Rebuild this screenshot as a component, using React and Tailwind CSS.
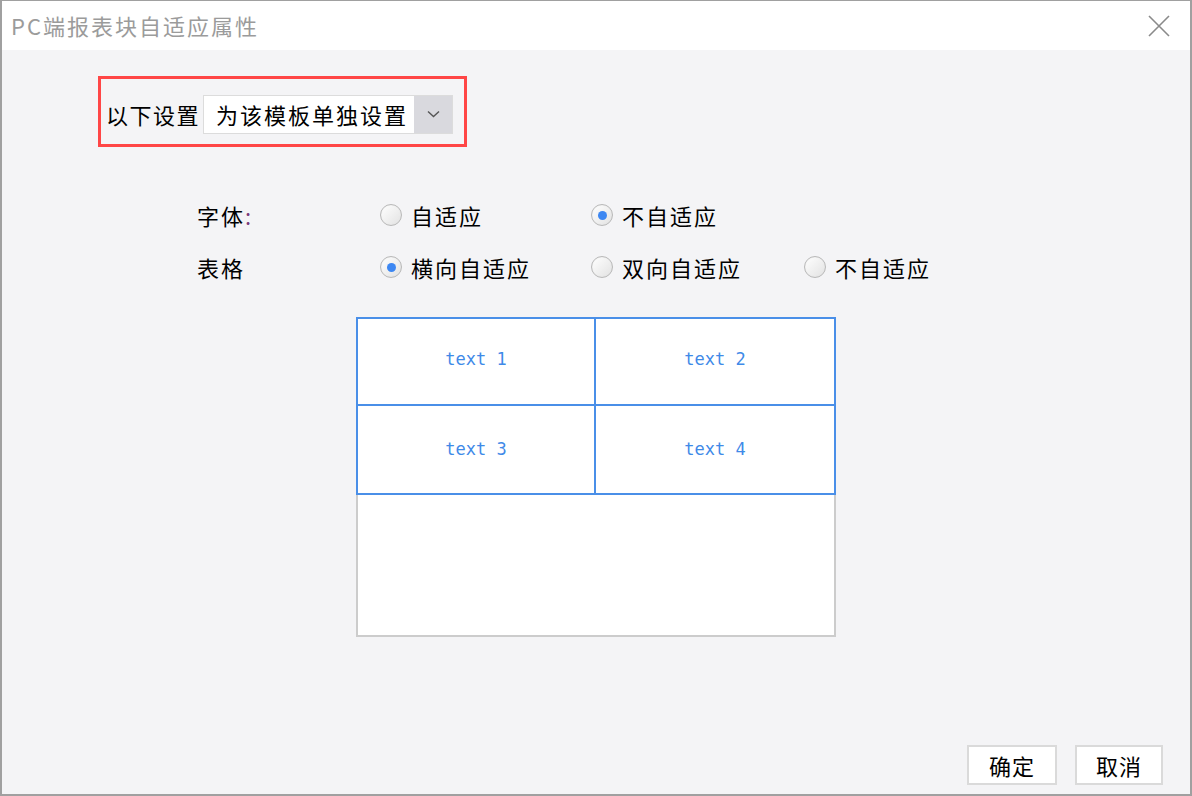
import React, { useState } from "react";

const cjk = { fontFamily: '"Noto Sans CJK SC", "Noto Sans", sans-serif' };

function Radio({ checked, label, onClick }) {
  return (
    <button type="button" onClick={onClick} className="flex items-center gap-[9px] h-[30px]">
      <span className="w-[22px] h-[22px] rounded-full border border-[#b9b9b9] bg-gradient-to-br from-white to-[#e2e2e2] flex items-center justify-center shadow-[inset_0_0_1px_#ddd]">
        {checked && <span className="w-[9px] h-[9px] rounded-full bg-[#3d87f2]" />}
      </span>
      <span className="text-[22px] leading-none text-black tracking-[2px]">{label}</span>
    </button>
  );
}

export default function App() {
  const [font, setFont] = useState("none");
  const [table, setTable] = useState("h");

  return (
    <div className="w-[1192px] h-[796px] flex flex-col bg-[#f4f4f6] border-t border-x-2 border-b-2 border-[#a0a0a0]" style={cjk}>
      {/* title bar */}
      <div className="h-[49px] bg-white flex items-center justify-between pl-[9px] pr-[20px]">
        <span className="text-[22px] text-[#9b9b9b] tracking-[2px]">PC端报表块自适应属性</span>
        <svg width="22" height="22" viewBox="0 0 22 22">
          <path d="M1 1L21 21M21 1L1 21" stroke="#8a8a8a" strokeWidth="1.6" />
        </svg>
      </div>

      <div className="flex-1 flex flex-col">
        {/* template setting */}
        <div className="mt-[26px] ml-[96px] w-[369px] h-[71px] border-[3px] border-[#ff4646] flex items-center pl-[5px] pt-[5px]">
          <span className="text-[22px] leading-none tracking-[1.5px] text-black">以下设置</span>
          <div className="ml-[3px] w-[250px] h-[39px] flex border border-[#dcdcdc] bg-white">
            <span className="flex-1 flex items-center pl-[12px] text-[22px] leading-none tracking-[2px] text-black">为该模板单独设置</span>
            <span className="w-[38px] bg-[#d9d9de] flex items-center justify-center">
              <svg width="13" height="8" viewBox="0 0 13 8">
                <path d="M1 1.5L6.5 6.5L12 1.5" fill="none" stroke="#555" strokeWidth="1.4" />
              </svg>
            </span>
          </div>
        </div>

        {/* options */}
        <div className="mt-[53px] ml-[195px] grid grid-cols-[183px_211px_213px_auto] gap-y-[22px] items-center">
          <span className="text-[22px] leading-none tracking-[2px] text-black">
            字体<span className="text-[#7a3b7a]">:</span>
          </span>
          <Radio label="自适应" checked={font === "auto"} onClick={() => setFont("auto")} />
          <Radio label="不自适应" checked={font === "none"} onClick={() => setFont("none")} />
          <span />

          <span className="text-[22px] leading-none tracking-[2px] text-black">表格</span>
          <Radio label="横向自适应" checked={table === "h"} onClick={() => setTable("h")} />
          <Radio label="双向自适应" checked={table === "both"} onClick={() => setTable("both")} />
          <Radio label="不自适应" checked={table === "none"} onClick={() => setTable("none")} />
        </div>

        {/* preview */}
        <div className="mt-[35px] ml-[354px] w-[480px] h-[320px] bg-white flex flex-col">
          <div className="h-[178px] grid grid-cols-2 grid-rows-2 border-2 border-[#4a8fe8] text-[17px] text-[#3f8ae8]" style={{ fontFamily: '"DejaVu Sans Mono", monospace' }}>
            <div className="flex items-center justify-center border-r-2 border-b-2 border-[#4a8fe8] pb-[4px]">text 1</div>
            <div className="flex items-center justify-center border-b-2 border-[#4a8fe8] pb-[4px]">text 2</div>
            <div className="flex items-center justify-center border-r-2 border-[#4a8fe8]">text 3</div>
            <div className="flex items-center justify-center">text 4</div>
          </div>
          <div className="flex-1 border-2 border-t-0 border-[#cccccc]" />
        </div>

        {/* actions */}
        <div className="mt-auto mb-[9px] mr-[27px] flex justify-end gap-[18px]">
          <button className="w-[90px] h-[40px] bg-white border-2 border-[#dadada] text-[22px] tracking-[1px] text-black">确定</button>
          <button className="w-[88px] h-[40px] bg-white border-2 border-[#dadada] text-[22px] tracking-[1px] text-black">取消</button>
        </div>
      </div>
    </div>
  );
}
